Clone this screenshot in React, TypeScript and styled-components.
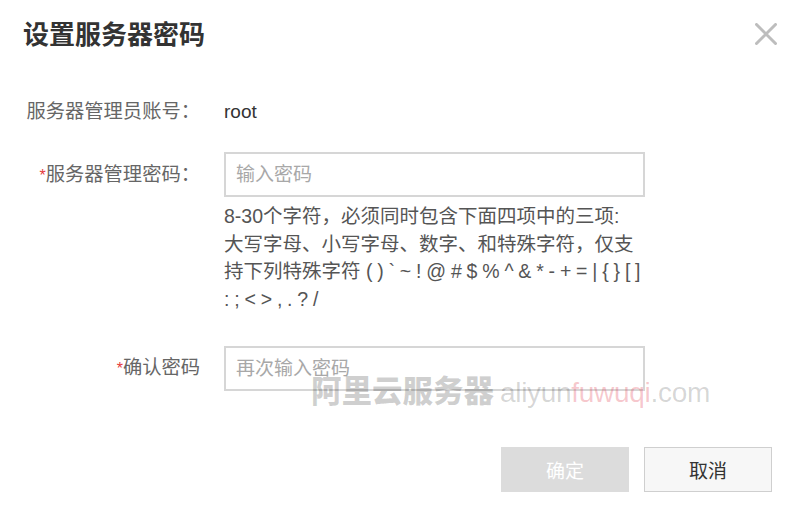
import React from 'react';
import styled, { createGlobalStyle } from 'styled-components';

const GlobalStyle = createGlobalStyle`
  html, body {
    margin: 0;
    padding: 0;
    background: #ffffff;
  }
  body {
    font-family: "Liberation Sans", "Noto Sans CJK SC", sans-serif;
  }
`;

const Dialog = styled.div`
  position: relative;
  width: 800px;
  height: 506px;
  background: #fff;
  box-sizing: border-box;
  overflow: hidden;
`;

const Header = styled.div`
  display: flex;
  justify-content: space-between;
  align-items: flex-start;
  padding: 20px 22px 0 23px;
`;

const Title = styled.h1`
  margin: 0;
  font-size: 26px;
  line-height: 30px;
  font-weight: 700;
  color: #333;
`;

const CloseButton = styled.button`
  width: 24px;
  height: 24px;
  margin-top: 2px;
  padding: 0;
  border: none;
  background: transparent;
  cursor: pointer;
  display: flex;
  align-items: center;
  justify-content: center;
`;

const Form = styled.div`
  display: flex;
  flex-direction: column;
  padding-top: 47px;
`;

const Row = styled.div<{ $gap: number }>`
  display: grid;
  grid-template-columns: 200px 421px;
  column-gap: 24px;
  align-items: center;
  margin-bottom: ${p => p.$gap}px;
`;

const Label = styled.label<{ $top?: boolean }>`
  text-align: right;
  font-size: 19.3px;
  line-height: 30px;
  color: #666;
  white-space: nowrap;
  align-self: ${p => (p.$top ? 'start' : 'center')};
  margin-top: ${p => (p.$top ? '8px' : '0')};
`;

const Star = styled.span`
  color: #e4393c;
  font-size: 16px;
`;

const Value = styled.span`
  font-size: 19px;
  line-height: 30px;
  color: #333;
`;

const Field = styled.div`
  display: flex;
  flex-direction: column;
`;

const Input = styled.input`
  box-sizing: border-box;
  width: 421px;
  height: 45px;
  padding: 0 10px;
  border: 2px solid #d6d6d6;
  outline: none;
  font-family: inherit;
  font-size: 19px;
  color: #333;
  background: #fff;

  &::placeholder {
    color: #a8a8a8;
  }
`;

const Help = styled.div`
  margin-top: 6px;
  font-size: 19.5px;
  line-height: 27.5px;
  color: #555;
  white-space: nowrap;
`;

const Symbols = styled.span`
  word-spacing: -0.6px;
`;

const Footer = styled.div`
  display: flex;
  justify-content: flex-end;
  gap: 15px;
  padding-right: 28px;
  margin-top: 56px;
`;

const Button = styled.button<{ $primary?: boolean }>`
  box-sizing: border-box;
  width: 128px;
  height: 45px;
  font-family: inherit;
  font-size: 19px;
  border: 1px solid ${p => (p.$primary ? '#dcdcdc' : '#cfcfcf')};
  background: ${p => (p.$primary ? '#dcdcdc' : '#f7f7f7')};
  color: ${p => (p.$primary ? '#fff' : '#333')};
  cursor: ${p => (p.$primary ? 'not-allowed' : 'pointer')};
`;

const Watermark = styled.div`
  position: absolute;
  left: 311px;
  top: 370px;
  display: flex;
  align-items: baseline;
  gap: 6px;
  pointer-events: none;
  white-space: nowrap;
`;

const MarkCn = styled.span`
  font-family: "Noto Sans CJK SC", sans-serif;
  font-size: 30.5px;
  font-weight: 900;
  line-height: 38px;
  color: rgba(0, 0, 0, 0.19);
`;

const MarkEn = styled.span`
  font-family: "Liberation Sans", sans-serif;
  font-size: 28px;
  letter-spacing: -0.3px;
  color: rgba(0, 0, 0, 0.17);
`;

const MarkPink = styled.span`
  color: rgba(225, 60, 80, 0.28);
`;

const CloseIcon = () => (
  <svg width="22" height="22" viewBox="0 0 22 22">
    <path d="M1.5 1.5 L20.5 20.5 M20.5 1.5 L1.5 20.5" stroke="#bdbdbd" strokeWidth="3" strokeLinecap="round" />
  </svg>
);

export default function App() {
  return (
    <>
      <GlobalStyle />
      <Dialog>
        <Header>
          <Title>设置服务器密码</Title>
          <CloseButton aria-label="关闭"><CloseIcon /></CloseButton>
        </Header>
        <Form>
          <Row $gap={25}>
            <Label>服务器管理员账号：</Label>
            <Value>root</Value>
          </Row>
          <Row $gap={33}>
            <Label $top><Star>*</Star>服务器管理密码：</Label>
            <Field>
              <Input type="password" placeholder="输入密码" />
              <Help>
                8-30个字符，必须同时包含下面四项中的三项:<br />
                大写字母、小写字母、数字、和特殊字符，仅支<br />
                持下列特殊字符 <Symbols>( ) ` ~ ! @ # $ % ^ &amp; * - + = | {'{'} {'}'} [ ]</Symbols><br />
                <Symbols>: ; &lt; &gt; , . ? /</Symbols>
              </Help>
            </Field>
          </Row>
          <Row $gap={0}>
            <Label><Star>*</Star>确认密码</Label>
            <Input type="password" placeholder="再次输入密码" />
          </Row>
        </Form>
        <Footer>
          <Button $primary disabled>确定</Button>
          <Button>取消</Button>
        </Footer>
        <Watermark>
          <MarkCn>阿里云服务器</MarkCn>
          <MarkEn>aliyun<MarkPink>fuwuqi</MarkPink>.com</MarkEn>
        </Watermark>
      </Dialog>
    </>
  );
}
